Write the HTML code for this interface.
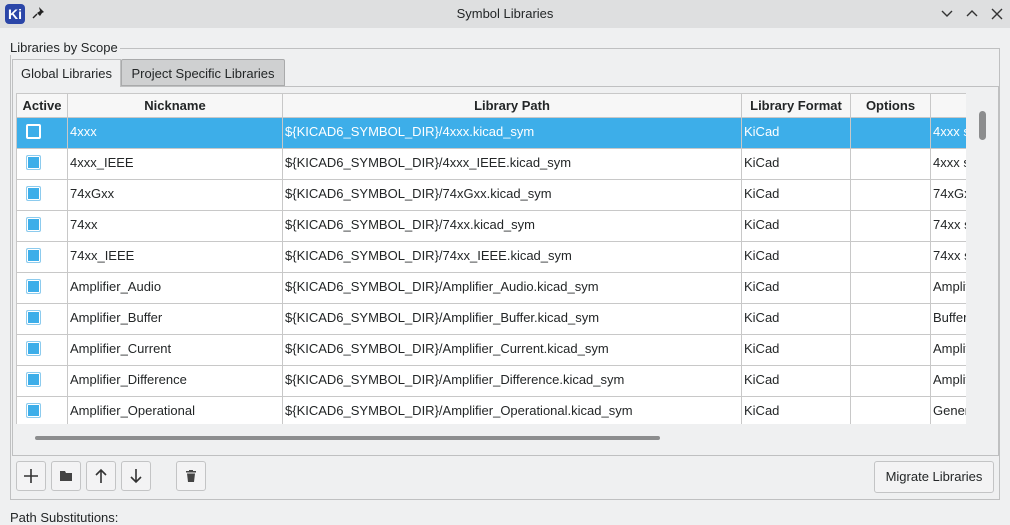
<!DOCTYPE html>
<html><head><style>
*{box-sizing:border-box;margin:0;padding:0}
body{width:1010px;height:518px;overflow:hidden;background:#eff0f1;font-family:"Liberation Sans",sans-serif;font-size:13px;color:#232627;position:relative}
.abs{position:absolute}
#title{left:0;top:0;width:1010px;height:28px;background:#dedfe0}
table{border-collapse:collapse;table-layout:fixed}
td,th{border:1px solid #c8c8c8;height:31px;white-space:nowrap;overflow:hidden;padding-left:2px;padding-bottom:4px;text-align:left;font-weight:normal}
th{height:24px;font-weight:bold;text-align:center;background:#f7f7f7;padding:0}
tr.sel td{background:#3daee9;color:#fff}
.cb{display:inline-block;width:15px;height:15px;border:1px solid #8ccbee;border-radius:2px;background:#3daee9;box-shadow:inset 0 0 0 1px #fff;margin-left:7px;vertical-align:middle}
tr.sel .cb{background:#3daee9;border:2px solid #fff;box-shadow:none}
.btn{position:absolute;top:461px;width:30px;height:30px;border:1px solid #c3c4c5;border-radius:3px;background:#f3f3f4}
</style></head><body>
<div id="title" class="abs">
 <div class="abs" style="left:5px;top:4px;width:20px;height:20px;background:#2b46a8;border-radius:4px;color:#fff;font-weight:bold;font-size:14px;line-height:20px;text-align:center">Ki</div>
 <svg class="abs" style="left:31px;top:6px" width="14" height="14"><path d="M8 1l5 5-2 1-2 3-3-3 3-2z" fill="#222"/><path d="M6 8l-4 4" stroke="#222" stroke-width="1.4"/></svg>
 <div class="abs" style="left:0;width:1010px;top:6px;text-align:center">Symbol Libraries</div>
 <svg class="abs" style="left:938px;top:7px" width="70" height="14"><path d="M4 4l5 5 5-5M29 9l5-5 5 5M54 2l10 10M64 2l-10 10" stroke="#333" stroke-width="1.4" fill="none"/></svg>
</div>
<div class="abs" style="left:10px;top:48px;width:990px;height:452px;border:1px solid #bfc0c1"></div>
<div class="abs" style="left:8px;top:40px;background:#eff0f1;padding:0 2px">Libraries by Scope</div>
<div class="abs" style="left:12px;top:86px;width:987px;height:370px;border:1px solid #bfc0c1"></div>
<div class="abs" style="left:12px;top:59px;width:109px;height:28px;border:1px solid #bfc0c1;border-bottom:none;background:#eff0f1;text-align:center;line-height:28px">Global Libraries</div>
<div class="abs" style="left:121px;top:59px;width:164px;height:27px;border:1px solid #a9aaab;background:#cfd0d1;border-radius:2px 2px 0 0;text-align:center;line-height:27px">Project Specific Libraries</div>
<div class="abs" style="left:16px;top:93px;width:950px;height:331px;overflow:hidden;background:#fff">
<table style="width:1000px">
<colgroup><col style="width:51px"><col style="width:215px"><col style="width:459px"><col style="width:109px"><col style="width:80px"><col style="width:86px"></colgroup>
<tr><th>Active</th><th>Nickname</th><th>Library Path</th><th>Library Format</th><th>Options</th><th></th></tr>
<tr class="sel"><td><span class="cb"></span></td><td>4xxx</td><td>${KICAD6_SYMBOL_DIR}/4xxx.kicad_sym</td><td>KiCad</td><td></td><td>4xxx series</td></tr>
<tr><td><span class="cb"></span></td><td>4xxx_IEEE</td><td>${KICAD6_SYMBOL_DIR}/4xxx_IEEE.kicad_sym</td><td>KiCad</td><td></td><td>4xxx series</td></tr>
<tr><td><span class="cb"></span></td><td>74xGxx</td><td>${KICAD6_SYMBOL_DIR}/74xGxx.kicad_sym</td><td>KiCad</td><td></td><td>74xGxx</td></tr>
<tr><td><span class="cb"></span></td><td>74xx</td><td>${KICAD6_SYMBOL_DIR}/74xx.kicad_sym</td><td>KiCad</td><td></td><td>74xx series</td></tr>
<tr><td><span class="cb"></span></td><td>74xx_IEEE</td><td>${KICAD6_SYMBOL_DIR}/74xx_IEEE.kicad_sym</td><td>KiCad</td><td></td><td>74xx series</td></tr>
<tr><td><span class="cb"></span></td><td>Amplifier_Audio</td><td>${KICAD6_SYMBOL_DIR}/Amplifier_Audio.kicad_sym</td><td>KiCad</td><td></td><td>Amplifier</td></tr>
<tr><td><span class="cb"></span></td><td>Amplifier_Buffer</td><td>${KICAD6_SYMBOL_DIR}/Amplifier_Buffer.kicad_sym</td><td>KiCad</td><td></td><td>Buffer</td></tr>
<tr><td><span class="cb"></span></td><td>Amplifier_Current</td><td>${KICAD6_SYMBOL_DIR}/Amplifier_Current.kicad_sym</td><td>KiCad</td><td></td><td>Amplifier</td></tr>
<tr><td><span class="cb"></span></td><td>Amplifier_Difference</td><td>${KICAD6_SYMBOL_DIR}/Amplifier_Difference.kicad_sym</td><td>KiCad</td><td></td><td>Amplifier</td></tr>
<tr><td><span class="cb"></span></td><td>Amplifier_Operational</td><td>${KICAD6_SYMBOL_DIR}/Amplifier_Operational.kicad_sym</td><td>KiCad</td><td></td><td>General</td></tr>
</table></div>
<div class="abs" style="left:979px;top:111px;width:7px;height:29px;border-radius:4px;background:#8c8d8e"></div>
<div class="abs" style="left:35px;top:436px;width:625px;height:4px;border-radius:2px;background:#8c8d8e"></div>
<div class="btn" style="left:16px"><svg width="28" height="28"><path d="M14 7v14M7 14h14" stroke="#333" stroke-width="1.6"/></svg></div>
<div class="btn" style="left:51px"><svg width="28" height="28"><path d="M8 9h5l1 2h6v8H8z" fill="#444"/></svg></div>
<div class="btn" style="left:86px"><svg width="28" height="28"><path d="M14 21V8M9 13l5-5 5 5" stroke="#333" stroke-width="1.6" fill="none"/></svg></div>
<div class="btn" style="left:121px"><svg width="28" height="28"><path d="M14 7v13M9 15l5 5 5-5" stroke="#333" stroke-width="1.6" fill="none"/></svg></div>
<div class="btn" style="left:176px"><svg width="28" height="28"><path d="M9 9h10v1.5H9zM12 8h4v1h-4zM10 11.5h8l-1 8.5h-6z" fill="#444"/></svg></div>
<div class="btn" style="left:874px;width:120px;height:32px;text-align:center;line-height:30px">Migrate Libraries</div>
<div class="abs" style="left:10px;top:510px">Path Substitutions:</div>
</body></html>
